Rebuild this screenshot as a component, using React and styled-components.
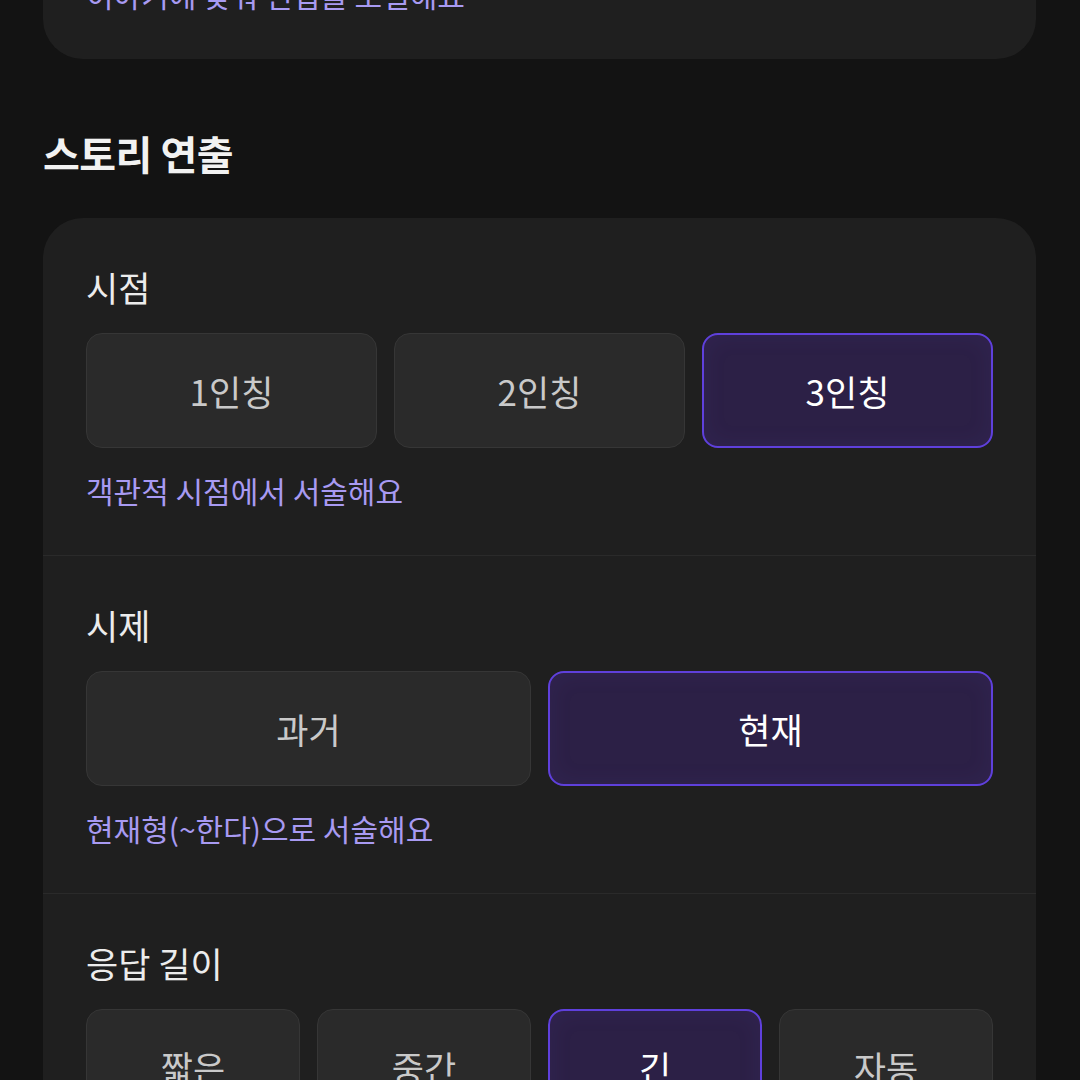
import { createGlobalStyle, styled, css } from "styled-components";

const GlobalStyle = createGlobalStyle`
  html, body {
    margin: 0;
    padding: 0;
    height: 1080px;
    overflow: hidden;
    background: #131313;
  }
  body {
    font-family: "Noto Sans CJK KR", "Noto Sans", sans-serif;
    color: #ececec;
  }
`;

const SECTIONS = [
  {
    title: "시점",
    options: ["1인칭", "2인칭", "3인칭"],
    selected: 2,
    description: "객관적 시점에서 서술해요",
  },
  {
    title: "시제",
    options: ["과거", "현재"],
    selected: 1,
    description: "현재형(~한다)으로 서술해요",
  },
  {
    title: "응답 길이",
    options: ["짧은", "중간", "긴", "자동"],
    selected: 2,
    description: "길고 자세하게 응답해요",
  },
];

const OptionSection = ({ title, options, selected, description }) => (
  <Section>
    <Label>{title}</Label>
    <OptionGrid $count={options.length}>
      {options.map((option, index) => (
        <OptionButton key={option} $active={index === selected}>
          {option}
        </OptionButton>
      ))}
    </OptionGrid>
    <Description>{description}</Description>
  </Section>
);

const App = () => {
  return (
    <>
      <GlobalStyle />
      <Page>
        <Card>
          <Section>
            <Label>문체</Label>
            <Description>이야기에 맞춰 편집을 조절해요</Description>
          </Section>
        </Card>
        <Heading>스토리 연출</Heading>
        <Card>
          {SECTIONS.map((section) => (
            <OptionSection key={section.title} {...section} />
          ))}
        </Card>
      </Page>
    </>
  );
};

export default App;

const Page = styled.div`
  /* scrolled view: the first card starts above the fold */
  margin-top: -137px;
  padding-inline: 43px 44px;
  display: flex;
  flex-direction: column;
`;

const Card = styled.div`
  background: #1f1f1f;
  border-radius: 40px;
  overflow: hidden;
`;

const Heading = styled.h2`
  margin: 70px 0 41px;
  font-size: 40px;
  line-height: 48px;
  font-weight: 600;
  color: #f2f2f2;
  letter-spacing: -0.5px;
`;

const Section = styled.div`
  padding: 49px 43px 47px;

  & + & {
    border-top: 1.5px solid #2a2a2a;
  }
`;

const Label = styled.div`
  font-size: 35px;
  line-height: 40px;
  font-weight: 400;
  color: #ececec;
`;

const OptionGrid = styled.div`
  margin-top: 26px;
  display: grid;
  grid-template-columns: repeat(${(p) => p.$count}, 1fr);
  gap: 17px;
`;

const OptionButton = styled.button`
  height: 115px;
  border-radius: 16px;
  border: 1.5px solid #363636;
  background: #2a2a2a;
  color: #c9c9c9;
  font-family: inherit;
  font-size: 35px;
  font-weight: 400;
  display: flex;
  align-items: center;
  justify-content: center;
  padding: 0;

  ${(p) =>
    p.$active &&
    css`
      border: 2px solid #5f40dc;
      background: #2c2046;
      color: #ffffff;
      box-shadow: inset 0 0 24px rgba(120, 90, 220, 0.08);
    `}
`;

const Description = styled.div`
  margin-top: 24px;
  font-size: 30px;
  line-height: 36px;
  color: #a89af2;
`;
